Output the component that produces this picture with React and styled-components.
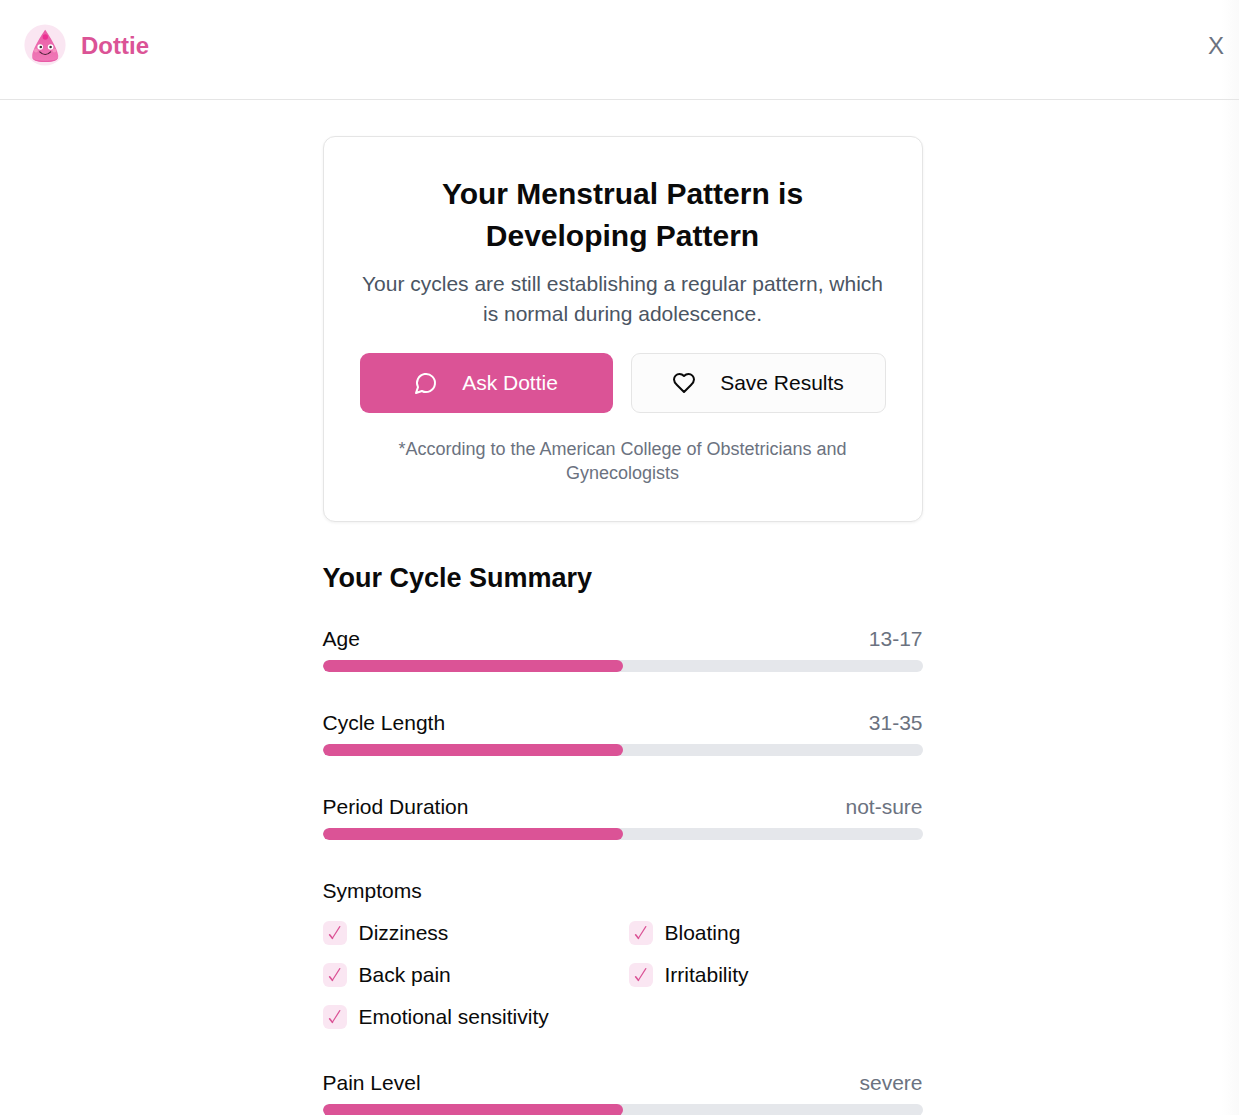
import React from "react";
import styled, { createGlobalStyle } from "styled-components";

const pink = "#db5396";

const GlobalStyle = createGlobalStyle`
  *, *::before, *::after { box-sizing: border-box; }
  body {
    margin: 0;
    background: #fff;
    color: #0a0a0a;
    font: 21px/30px "Liberation Sans", Arial, sans-serif;
  }
  h1, h2, h3, p, ul { margin: 0; padding: 0; }
`;

const Page = styled.div`
  min-height: 100vh;
  background: linear-gradient(to left, #fafafa, #fff 18px);
`;

const Header = styled.header`
  display: flex;
  align-items: center;
  justify-content: space-between;
  padding: 24px 15px 33px 24px;
  border-bottom: 1px solid #e5e5e5;
`;

const Brand = styled.div`
  display: flex;
  align-items: center;
  gap: 15px;
  color: ${pink};
  font-size: 24px;
  line-height: 33px;
  font-weight: 700;
`;

const CloseButton = styled.button`
  padding: 0;
  border: 0;
  background: none;
  color: #6b7280;
  font: inherit;
  font-size: 24px;
  line-height: 33px;
  cursor: pointer;
`;

const Main = styled.main`
  padding: 36px 24px 36px 30px;
`;

const Column = styled.div`
  display: grid;
  gap: 36px;
  max-width: 600px;
  margin: 0 auto;
`;

const Card = styled.section`
  padding: 36px;
  border: 1px solid #e5e5e5;
  border-radius: 12px;
  background: #fff;
  box-shadow: 0 1px 3px rgba(0, 0, 0, 0.06);
  text-align: center;
`;

const Title = styled.h1`
  font-size: 30px;
  line-height: 42px;
`;

const Lead = styled.p`
  && { margin-top: 12px; }
  color: #4b5563;
`;

const Actions = styled.div`
  display: flex;
  gap: 18px;
  margin: 24px 0;
`;

const ActionButton = styled.button`
  flex: 1;
  display: flex;
  align-items: center;
  justify-content: center;
  gap: 24px;
  height: 60px;
  padding: 0 12px;
  border: ${(p) => (p.$primary ? "0" : "1px solid #e5e5e5")};
  border-radius: 9px;
  background: ${(p) => (p.$primary ? pink : "#fcfcfc")};
  color: ${(p) => (p.$primary ? "#fff" : "#0a0a0a")};
  font: inherit;
  cursor: pointer;
`;

const Footnote = styled.p`
  color: #6b7280;
  font-size: 18px;
  line-height: 24px;
`;

const Summary = styled.section`
  display: grid;
  gap: 36px;
`;

const SummaryTitle = styled.h2`
  && { margin-bottom: -10px; }
  font-size: 27px;
  line-height: 40px;
`;

const MetricHead = styled.div`
  display: flex;
  justify-content: space-between;
  margin-bottom: 6px;
`;

const MetricValue = styled.span`
  color: #6b7280;
`;

const Track = styled.div`
  height: 12px;
  border-radius: 6px;
  background: #e5e7eb;
  overflow: hidden;
`;

const Fill = styled.div`
  height: 100%;
  border-radius: 6px;
  background: ${pink};
`;

const GroupTitle = styled.h3`
  && { margin-bottom: 12px; }
  font-size: 21px;
  font-weight: 400;
`;

const SymptomList = styled.ul`
  display: grid;
  grid-template-columns: 1fr 1fr;
  gap: 12px;
  list-style: none;
`;

const SymptomLabel = styled.label`
  display: flex;
  align-items: center;
  gap: 12px;
`;

const TickBox = styled.span`
  display: grid;
  width: 24px;
  height: 24px;

  > * { grid-area: 1 / 1; }
  > svg { visibility: hidden; pointer-events: none; z-index: 1; }
  > input:checked + svg { visibility: visible; }
`;

const TickInput = styled.input`
  appearance: none;
  width: 24px;
  height: 24px;
  margin: 0;
  border-radius: 6px;
  background: #fae6f2;
`;

function Logo() {
  return (
    <svg width="42" height="42" viewBox="0 0 42 42" aria-hidden="true">
      <defs>
        <linearGradient id="drop" x1="0" y1="0" x2="0" y2="1">
          <stop offset="0" stopColor="#e85aa5" />
          <stop offset="1" stopColor="#f07ab8" />
        </linearGradient>
      </defs>
      <circle cx="21" cy="21" r="20.6" fill="#fae6f2" />
      <path d="M21.2 5.8C22.6 7.8 33.6 24 34.2 31.5C34.5 36 30 37.8 21.2 37.8S7.8 36 8.2 31.5C8.8 24 19.8 7.8 21.2 5.8Z" fill="url(#drop)" />
      <path d="M8.2 32.5C9 36 14 36.8 21.2 36.8S33.4 36 34.2 32.5C34.2 36.6 30 38 21.2 38S8.2 36.6 8.2 32.5Z" fill="#e85aa5" />
      <circle cx="21.3" cy="13" r="2.7" fill="#ec2f92" />
      <circle cx="12" cy="26.4" r="2" fill="#f593c0" />
      <circle cx="30.4" cy="26.4" r="2" fill="#f593c0" />
      <circle cx="16.2" cy="23" r="2.8" fill="#fff" />
      <circle cx="26.6" cy="23" r="2.8" fill="#fff" />
      <circle cx="16.8" cy="23" r="1.3" fill="#333" />
      <circle cx="26.6" cy="23" r="1.3" fill="#333" />
      <path d="M15.8 27.8Q21.2 33.2 26.6 27.8" fill="none" stroke="#4a2338" strokeWidth="1.2" strokeLinecap="round" />
    </svg>
  );
}

function LineIcon({ d }) {
  return (
    <svg width="24" height="24" viewBox="0 0 24 24" fill="none" stroke="currentColor" strokeWidth="2" strokeLinecap="round" strokeLinejoin="round" aria-hidden="true">
      <path d={d} />
    </svg>
  );
}

const chatPath = "M7.9 20A9 9 0 1 0 4 16.1L2 22Z";
const heartPath =
  "M19 14c1.49-1.46 3-3.21 3-5.5A5.5 5.5 0 0 0 16.5 3c-1.76 0-3 .5-4.5 2-1.5-1.5-2.74-2-4.5-2A5.5 5.5 0 0 0 2 8.5c0 2.3 1.5 4.05 3 5.5l7 7Z";

function Metric({ label, value, percent }) {
  return (
    <div>
      <MetricHead>
        <span>{label}</span>
        <MetricValue>{value}</MetricValue>
      </MetricHead>
      <Track role="progressbar" aria-label={label} aria-valuenow={percent} aria-valuemin={0} aria-valuemax={100}>
        <Fill style={{ width: `${percent}%` }} />
      </Track>
    </div>
  );
}

function Symptom({ name }) {
  return (
    <li>
      <SymptomLabel>
        <TickBox>
          <TickInput type="checkbox" defaultChecked />
          <svg width="24" height="24" viewBox="0 0 24 24" fill="none" stroke={pink} strokeLinecap="round" strokeLinejoin="round" aria-hidden="true">
            <path d="M6.6 13.8L9.4 17.3" strokeWidth="1.6" />
            <path d="M9.4 17.3L16.8 5.6" strokeWidth="1.2" />
          </svg>
        </TickBox>
        {name}
      </SymptomLabel>
    </li>
  );
}

const cycleMetrics = [
  { label: "Age", value: "13-17", percent: 50 },
  { label: "Cycle Length", value: "31-35", percent: 50 },
  { label: "Period Duration", value: "not-sure", percent: 50 },
];

const symptoms = ["Dizziness", "Bloating", "Back pain", "Irritability", "Emotional sensitivity"];

export default function App() {
  return (
    <Page>
      <GlobalStyle />
      <Header>
        <Brand>
          <Logo />
          <span>Dottie</span>
        </Brand>
        <CloseButton type="button">X</CloseButton>
      </Header>
      <Main>
        <Column>
          <Card>
            <Title>
              Your Menstrual Pattern is
              <br />
              Developing Pattern
            </Title>
            <Lead>Your cycles are still establishing a regular pattern, which is normal during adolescence.</Lead>
            <Actions>
              <ActionButton type="button" $primary>
                <LineIcon d={chatPath} />
                Ask Dottie
              </ActionButton>
              <ActionButton type="button">
                <LineIcon d={heartPath} />
                Save Results
              </ActionButton>
            </Actions>
            <Footnote>*According to the American College of Obstetricians and Gynecologists</Footnote>
          </Card>
          <Summary>
            <SummaryTitle>Your Cycle Summary</SummaryTitle>
            {cycleMetrics.map((m) => (
              <Metric key={m.label} {...m} />
            ))}
            <div>
              <GroupTitle>Symptoms</GroupTitle>
              <SymptomList>
                {symptoms.map((s) => (
                  <Symptom key={s} name={s} />
                ))}
              </SymptomList>
            </div>
            <Metric label="Pain Level" value="severe" percent={50} />
          </Summary>
        </Column>
      </Main>
    </Page>
  );
}
